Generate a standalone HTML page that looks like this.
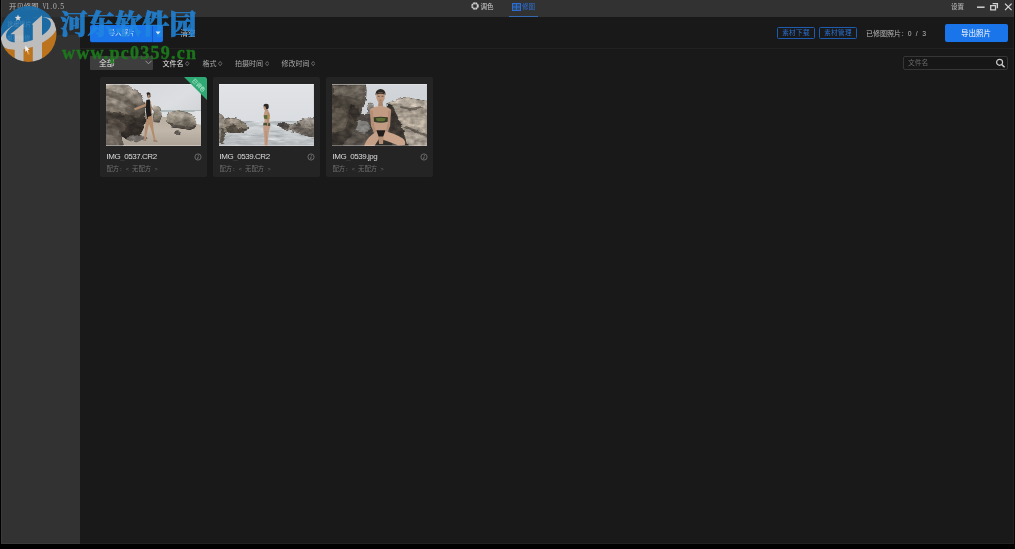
<!DOCTYPE html>
<html lang="zh-CN">
<head>
<meta charset="utf-8">
<title>开贝修图 V1.0.5</title>
<style>
*{box-sizing:border-box;margin:0;padding:0}
html,body{width:1015px;height:549px;overflow:hidden;background:#000}
body{font-family:"Liberation Sans","Noto Sans CJK SC",sans-serif;color:#ddd;position:relative}
.abs{position:absolute}
#app{position:absolute;left:1px;top:0;width:1013px;height:544px;background:#191919;overflow:hidden;will-change:transform}
#app::after{content:"";position:absolute;left:0;top:0;right:0;bottom:0;border:1px solid rgba(255,255,255,.045);border-top:none;pointer-events:none}
#titlebar{position:absolute;left:0;top:0;width:1013px;height:17px;background:#323232}
#sidebar{position:absolute;left:0;top:17px;width:79px;height:527px;background:#323232}
#sidesel{position:absolute;left:0;top:17px;width:79px;height:18px;background:#2a2a2a}
.t{position:absolute;white-space:nowrap;line-height:1}
.mono{font-family:"Liberation Mono","Noto Sans CJK SC",monospace}
#title{left:8px;top:3.200px;font-size:7.4px;color:#b8b8b8}
#title span{margin-left:3.700px;font-family:"Liberation Serif",serif;font-size:7.600px}
#title b,.cnt b{display:inline-block;width:3.600px;text-align:center;font-weight:normal}
.tab{font-size:6.500px;color:#d0d0d0;top:3.800px}
#divider{position:absolute;left:79px;top:48px;width:934px;height:1px;background:#222}
.btn{position:absolute;background:#1a74ea;border-radius:2px}
.obtn{position:absolute;top:27px;height:12px;border:1px solid #1f5cb0;border-radius:1.5px;color:#2b70d2;font-size:6.6px;line-height:10px;text-align:center;letter-spacing:.3px}
.card{position:absolute;top:77px;width:107px;height:100px;background:#242424;border-radius:2px;overflow:hidden}
.card .ph{position:absolute;left:6px;top:6.500px;width:94.500px;height:62px;overflow:hidden;background:#ccc}
.card .fn{left:6.200px;top:76px;font-size:8px;color:#dcdcdc;letter-spacing:-0.45px}
.card .rc{left:6.200px;top:88.500px;font-size:5.33px;line-height:7px;color:#6e6e6e;font-family:"Liberation Mono","Noto Sans CJK SC",monospace}
.card .rc b{font-weight:normal;font-size:6.4px}
.card .fn i{font-style:normal;opacity:.18}
.rib{position:absolute;right:0;top:0;width:23px;height:23px}
.card .info{position:absolute;left:93.300px;top:75.600px;width:8px;height:8px}
.sort{font-size:7px;color:#a8a8a8;top:60.300px}
.sic{position:absolute;top:60.600px;width:4.400px;height:5.200px}
</style>
</head>
<body>
<div id="app">
  <div id="titlebar"></div>
  <div id="sidebar"></div>
  <div id="sidesel"></div>
  <div id="divider"></div>
  <div class="t" id="title">开贝修图<span><b style="transform:scaleX(.7)">V</b><b>1</b><b>.</b><b>0</b><b>.</b><b>5</b></span></div>

  <div class="t" style="left:6.500px;top:21px;font-size:6px;color:#9a9a9a">批量修片</div>
  <div class="t" style="left:6px;top:35.500px;font-size:5.800px;color:#8a8a8a">单张精修</div>
  <!-- tabs -->
  <svg class="abs" style="left:468.800px;top:1.400px" width="10" height="10" viewBox="0 0 10 10"><circle cx="5" cy="5" r="2.800" fill="none" stroke="#d4d4d4" stroke-width="1.900" stroke-dasharray="1.750 0.450"/></svg>
  <div class="t tab" style="left:479.5px">调色</div>
  <svg class="abs" style="left:511px;top:2.500px" width="9" height="8" viewBox="0 0 9 8"><rect x=".5" y=".5" width="8" height="7" fill="#2a6fd6" fill-opacity=".35" stroke="#2a6fd6" stroke-width="1"/><path d="M.5 4h8M4.500 .5v7" stroke="#2a6fd6" stroke-width=".9"/></svg>
  <div class="t tab" style="left:521px;color:#2a70da">修图</div>
  <div class="abs" style="left:508px;top:16px;width:29px;height:1px;background:#3468b0"></div>

  <div class="t tab" style="left:950px;color:#c4c4c4">设置</div>
  <svg class="abs" style="left:974px;top:0" width="40" height="14" viewBox="0 0 40 14">
    <path d="M2 7.2h7.6" stroke="#d0d0d0" stroke-width="1.5"/>
    <path d="M17.6 3.6h4.8v4.6M15.7 5.6h4.8v4.2h-4.8z" fill="none" stroke="#d0d0d0" stroke-width="1.3"/>
    <path d="M30 3.6l6.6 6.6M36.6 3.6l-6.6 6.6" stroke="#d8d8d8" stroke-width="1.2"/>
  </svg>

  <!-- toolbar -->
  <div class="btn" style="left:89px;top:25px;width:73px;height:17px;box-shadow:0 .5px .5px #0d3c8a"></div>
  <div class="abs" style="left:151px;top:25px;width:1px;height:17px;background:#1659c6"></div>
  <div class="t" style="left:107.500px;top:30px;font-size:6.500px;color:#dbe8ff">导入照片</div>
  <div class="t" style="left:179.500px;top:29.500px;font-size:7.500px;color:#c8c8c8">清空</div>

  <div class="obtn" style="left:776px;width:38px">素材下载</div>
  <div class="obtn" style="left:818px;width:38px">素材管理</div>
  <div class="t cnt" style="left:865px;top:30.400px;font-size:7px;color:#bcbcbc">已修图照片<b style="width:3.500px">:</b><span style="margin-left:3.300px;font-size:6.800px"><b>0</b><b>&nbsp;</b><b>/</b><b>&nbsp;</b><b>3</b></span></div>

  <div class="btn" style="left:944px;top:24.300px;width:63.400px;height:17.900px"></div>
  <div class="t" style="left:960px;top:29.500px;font-size:7.500px;color:#fff">导出照片</div>

  <!-- filter -->
  <div class="abs" style="left:89px;top:56px;width:63px;height:14px;background:#3e3e3e;border-radius:1px"></div>
  <div class="t" style="left:98px;top:59.800px;font-size:7.800px;color:#e6e6e6">全部</div>
  <svg class="abs" style="left:144px;top:60px" width="7" height="5" viewBox="0 0 7 5"><path d="M.5 .8L3.5 3.8L6.5 .8" fill="none" stroke="#999" stroke-width="1"/></svg>
  <div class="t sort" style="left:161.5px;color:#e8e8e8">文件名</div>
  <div class="t sort" style="left:201.5px">格式</div>
  <div class="t sort" style="left:234px">拍摄时间</div>
  <div class="t sort" style="left:280.5px">修改时间</div>
  <svg class="sic" style="left:184.300px" viewBox="0 0 5 6"><path d="M2.500 .5L4.500 3L2.500 5.500L.5 3z" fill="none" stroke="#808080" stroke-width=".9"/></svg>
  <svg class="sic" style="left:217.200px" viewBox="0 0 5 6"><path d="M2.500 .5L4.500 3L2.500 5.500L.5 3z" fill="none" stroke="#808080" stroke-width=".9"/></svg>
  <svg class="sic" style="left:263.500px" viewBox="0 0 5 6"><path d="M2.500 .5L4.500 3L2.500 5.500L.5 3z" fill="none" stroke="#808080" stroke-width=".9"/></svg>
  <svg class="sic" style="left:310px" viewBox="0 0 5 6"><path d="M2.500 .5L4.500 3L2.500 5.500L.5 3z" fill="none" stroke="#808080" stroke-width=".9"/></svg>

  <!-- search -->
  <div class="abs" style="left:902px;top:56px;width:105px;height:14px;border:1px solid #363636;border-radius:2px;background:#171717"></div>
  <div class="t" style="left:907px;top:60px;font-size:6.800px;color:#6a6a6a">文件名</div>
  <svg class="abs" style="left:994px;top:58px" width="11" height="10" viewBox="0 0 11 10"><circle cx="4.6" cy="4.3" r="3" fill="none" stroke="#ccc" stroke-width="1.2"/><path d="M6.8 6.6L9.6 9.2" stroke="#ccc" stroke-width="1.5"/></svg>

  <!-- cards -->
  <div class="card" style="left:99.300px">
    <div class="ph"><svg class="abs" style="left:0;top:0" width="94.5" height="62" viewBox="0 0 94 62" preserveAspectRatio="none">
<defs>
<linearGradient id="sky1" x1="0" y1="0" x2="1" y2="1"><stop offset="0" stop-color="#d3d5d8"/><stop offset=".5" stop-color="#dcdee1"/><stop offset="1" stop-color="#c6c9cc"/></linearGradient>
<linearGradient id="sand1" x1="0" y1="0" x2="0" y2="1"><stop offset="0" stop-color="#b6ac9f"/><stop offset=".5" stop-color="#c0b6aa"/><stop offset="1" stop-color="#a89d90"/></linearGradient>
<linearGradient id="rk1" x1=".2" y1="0" x2=".5" y2="1"><stop offset="0" stop-color="#aa9c86"/><stop offset=".4" stop-color="#918372"/><stop offset=".62" stop-color="#5f5447"/><stop offset="1" stop-color="#3c322a"/></linearGradient>
<linearGradient id="rk1b" x1="0" y1="0" x2="0" y2="1"><stop offset="0" stop-color="#aca08c"/><stop offset=".5" stop-color="#93876f"/><stop offset="1" stop-color="#564c41"/></linearGradient>
<filter id="tex1" x="-5%" y="-5%" width="110%" height="110%" color-interpolation-filters="sRGB">
<feTurbulence type="fractalNoise" baseFrequency="0.13 0.2" numOctaves="3" seed="4" result="n"/>
<feColorMatrix in="n" type="matrix" values="1 0 0 0 0  1 0 0 0 0  1 0 0 0 0  0 0 0 0 1" result="g"/>
<feDisplacementMap in="SourceGraphic" in2="n" scale="3.5" xChannelSelector="R" yChannelSelector="G" result="d"/>
<feComposite in="d" in2="g" operator="arithmetic" k1=".7" k2=".65" k3="0" k4="0" result="m"/>
<feColorMatrix in="m" type="saturate" values=".62" result="ds"/>
<feGaussianBlur in="ds" stdDeviation=".65"/>
</filter>
<filter id="b1" x="-5%" y="-5%" width="110%" height="110%"><feGaussianBlur stdDeviation=".65"/></filter>
</defs>
<rect width="94" height="62" fill="url(#sky1)"/>
<g filter="url(#b1)">
<rect x="-2" y="29" width="98" height="36" fill="url(#sand1)"/>
<path d="M50 26.300H96V36L84 37L72 33L58 33L50 31z" fill="#dddfe1"/>
<path d="M50 26.200H96V27.800H50z" fill="#9fadad"/>
<path d="M88 27H96V41L90 40z" fill="#dfe1e3"/>
</g>
<g filter="url(#tex1)">
<path d="M46 22.500Q50.500 20.500 54 24L55.500 32L53 38.500L47.500 38z" fill="url(#rk1b)"/>
<path d="M60.500 31Q63 27.500 70 27Q82 27 88 32.500Q91 37 89.500 42.500L84 45.500L66 43L61 38.500z" fill="url(#rk1b)"/>
<path d="M63 30Q70 27.500 78 29L85 33L72 32.500z" fill="#a99e8a"/>
<path d="M61.500 38L70 41L84 42.500L89 41L88.500 44L84 45.800L66 43.300z" fill="#4e453b"/>
<ellipse cx="71" cy="48.800" rx="3.200" ry="1.300" fill="#665d52"/>
<path d="M-2 -2H13Q26 1.500 33 9Q38.500 15 38.800 22L39 36Q37.500 46 33.500 50.500L20 54L8 50L-2 40z" fill="url(#rk1)"/>
<path d="M-2 6Q12 6 22 14Q30 21 34 28L31 30Q24 22 14 17Q6 13 -2 13z" fill="#5a4c3e" opacity=".55"/>
<path d="M-2 20Q8 19 16 24Q24 30 28 38L24 40Q18 32 10 28Q4 26 -2 27z" fill="#8a7a64" opacity=".55"/>
<path d="M-2 27Q16 28 33 34L38.500 27L39.500 38Q37.500 46 33.500 50.500L20 54L8 50L-2 41z" fill="#2c241d" opacity=".58"/>
<path d="M2 35Q12 33 20 40Q22 46 16 48Q8 46 2 42z" fill="#6a5a48" opacity=".55"/>
<path d="M-2 39Q8 40 14 47L18 64H-2z" fill="#63574a"/>
<path d="M-2 50Q6 50 12 57L14 64H-2z" fill="#786b5c"/>
<path d="M19 54L33.500 50.500L41 54L30 58.500z" fill="#91877b" opacity=".75"/>
</g>
<g filter="url(#b1)">
<path d="M40.300 9Q42.300 7.300 44 9.300L44.300 13L41.600 13.800z" fill="#2a2320"/>
<path d="M41.500 10.800L43.400 10.600L43.600 14L42 14.600z" fill="#b08a6c"/>
<path d="M27.500 24.500L38.500 20L40.600 16L43 15.400L44.200 18.500L40.500 22L29 26.300z" fill="#b18c6e"/>
<path d="M40.200 16L43.600 15.400L45 22L45.300 31L43.800 36L40.800 35L39.500 26z" fill="#1f1b1a"/>
<path d="M43.600 16L45 20L45.800 29L44.800 30z" fill="#b8937a"/>
<path d="M41.500 33L45.800 31.500L46.800 39L47.300 46L49.300 56L47.700 56.500L45 46L42.800 40z" fill="#b38c6c"/>
<path d="M40.600 34L43.600 37L41.300 46L39.600 55.500L38 55.500L38.600 45z" fill="#b38d72"/>
<path d="M36.500 56.500L40 55L40 57z M46.800 56L50.800 56.500L51.200 58L47.300 57.500z" fill="#9a7860"/>
</g>
<rect width="94" height=".7" fill="#f0f0f0" opacity=".75"/><rect y="61.300" width="94" height=".7" fill="#f0f0f0" opacity=".6"/>
</svg></div>
    <svg class="rib" viewBox="0 0 23 23"><path d="M0 0H21.500Q23 0 23 1.500V23z" fill="#2fa974"/><text x="0" y="0" transform="translate(14.900 8.100) rotate(45)" text-anchor="middle" font-size="5.300" fill="#c4f2dc" font-family="'Liberation Sans','Noto Sans CJK SC',sans-serif" dominant-baseline="central">已调色</text></svg>
    <div class="t fn">IMG<i>_</i>0537.CR2</div>
    <div class="t rc"><b>配方</b>: &lt; <b>无配方</b> &gt;</div>
    <svg class="info" viewBox="0 0 8 8"><circle cx="4" cy="4" r="3.1" fill="none" stroke="#808080" stroke-width=".75"/><path d="M4.500 2.200L4.300 3M4.200 3.600L3.600 6" stroke="#808080" stroke-width=".85"/></svg>
  </div>
  <div class="card" style="left:212.300px">
    <div class="ph"><svg class="abs" style="left:0;top:0" width="94.5" height="62" viewBox="0 0 94 62" preserveAspectRatio="none">
<defs>
<linearGradient id="sky2" x1="0" y1="0" x2="0" y2="1"><stop offset="0" stop-color="#e1e3e7"/><stop offset="1" stop-color="#d5d8dc"/></linearGradient>
<linearGradient id="sea2" x1="0" y1="0" x2="0" y2="1"><stop offset="0" stop-color="#b4babd"/><stop offset=".35" stop-color="#c6cacc"/><stop offset="1" stop-color="#a9adb0"/></linearGradient>
<filter id="tex2" x="-5%" y="-5%" width="110%" height="110%" color-interpolation-filters="sRGB">
<feTurbulence type="fractalNoise" baseFrequency="0.2 0.3" numOctaves="3" seed="7" result="n"/>
<feColorMatrix in="n" type="matrix" values="1 0 0 0 0  1 0 0 0 0  1 0 0 0 0  0 0 0 0 1" result="g"/>
<feDisplacementMap in="SourceGraphic" in2="n" scale="3.5" xChannelSelector="R" yChannelSelector="G" result="d"/>
<feComposite in="d" in2="g" operator="arithmetic" k1=".7" k2=".65" k3="0" k4="0" result="m"/>
<feColorMatrix in="m" type="saturate" values=".62" result="ds"/>
<feGaussianBlur in="ds" stdDeviation=".65"/>
</filter>
<filter id="sea2f" x="0" y="0" width="100%" height="100%" color-interpolation-filters="sRGB">
<feTurbulence type="fractalNoise" baseFrequency="0.06 0.3" numOctaves="3" seed="9" result="n"/>
<feColorMatrix in="n" type="matrix" values="0 0 0 0 .88  0 0 0 0 .89  0 0 0 0 .9  2.4 0 0 0 -1.0" result="w"/>
<feColorMatrix in="n" type="matrix" values="0 0 0 0 .5  0 0 0 0 .53  0 0 0 0 .55  0 2.0 0 0 -1.0" result="k"/>
<feComposite in="w" in2="SourceGraphic" operator="in" result="w2"/>
<feComposite in="k" in2="SourceGraphic" operator="in" result="k2"/>
<feMerge result="m"><feMergeNode in="SourceGraphic"/><feMergeNode in="k2"/><feMergeNode in="w2"/></feMerge>
<feGaussianBlur in="m" stdDeviation=".5"/>
</filter>
<filter id="b2" x="-5%" y="-5%" width="110%" height="110%"><feGaussianBlur stdDeviation=".65"/></filter>
</defs>
<rect width="94" height="62" fill="url(#sky2)"/>
<g filter="url(#sea2f)">
<rect x="-2" y="37" width="98" height="28" fill="url(#sea2)"/>
</g>
<g filter="url(#b2)" opacity=".6">
<path d="M20 44Q40 41 60 45Q75 49 96 56V60Q70 52 50 50Q30 48 10 54z" fill="#d0d3d5" opacity=".7"/>
<path d="M4 55Q30 50 50 56Q70 60 96 58V64H-2z" fill="#b9bdc0" opacity=".8"/>
</g>
<g filter="url(#tex2)">
<path d="M-2 30Q3 29 5 34L6.500 44L5 60H-2z" fill="#9a8d7a"/>
<path d="M2 44L5.500 46L4.500 60H1z" fill="#5e5548"/>
<path d="M5 36Q10 33 17 34.500Q24 37 27 41L29 44L27 47Q20 49.500 12 48.500L6 47z" fill="#8c7c66"/>
<path d="M8 35.500Q14 34 19 36L22 39L12 39z" fill="#a49580"/>
<path d="M7 43L14 41L20 44L27 45L26 47.500Q18 50 8 48z" fill="#54483a"/>
<path d="M58 40Q61 37.500 66 38.500L72 41L76 39Q80 36 86 34.500L96 33V53Q88 53 82 50L72 47L62 44z" fill="#857a6c"/>
<path d="M58 40Q61 37.500 66 38.500L71 41.500L68 45L62 44z" fill="#4e4842"/>
<path d="M80 37Q86 34 96 33V40L88 41z" fill="#a0958a"/>
<path d="M72 44L80 42L86 45L96 44V53Q88 53 82 50z" fill="#6a6056"/>
<path d="M76 40L80 38.500L82 42L78 43z" fill="#5a5148"/>
</g>
<g filter="url(#b2)">
<path d="M44.300 21Q46.500 18.600 49.200 20.600Q50 23 48.800 25L46.500 25.500L44.800 24.500z" fill="#2b2522"/>
<path d="M44.300 22.300L46.300 22.500L47 25.800L45.200 26.200Q44.300 24.500 44.300 22.300z" fill="#ba967c"/>
<path d="M46 25.500H48.600L49.200 27.500H45.600z" fill="#b28c74"/>
<path d="M45.500 27Q47.500 26.500 49.300 27.200Q50.800 29.500 50.700 32Q50 35 50 37Q51.200 39.500 51 42Q50.300 45 49.600 48L48.800 54L48.300 62H45.300L45 54L44.300 47Q43.800 43.500 44.200 41Q45.500 38 45.300 36Q44.300 33 44.500 31Q44.800 28.500 45.500 27z" fill="#c29c84"/>
<path d="M44.500 31.200Q47 30.600 50.600 31.600L50.500 34.800Q47.500 35.600 44.800 34.600z" fill="#5f6a3a"/>
<path d="M49 31.200L50.700 31.600L50.600 35L49.200 35.200z" fill="#c4b444"/>
<path d="M44.200 39Q47.500 38.300 50.900 39.200L50.900 41.800Q48 42.300 46 41.300L44 41.600z" fill="#46503a"/>
<path d="M48.200 27.500Q49.800 28 50 31L49.600 37L48.600 42L47.600 42L48 36z" fill="#b08a72"/>
<path d="M46.800 47L47.200 62" stroke="#a8826a" stroke-width=".5" fill="none"/>
</g>
<rect width="94" height=".7" fill="#f4f4f4" opacity=".75"/><rect y="61.300" width="94" height=".7" fill="#f0f0f0" opacity=".6"/>
</svg></div>
    <div class="t fn">IMG<i>_</i>0539.CR2</div>
    <div class="t rc"><b>配方</b>: &lt; <b>无配方</b> &gt;</div>
    <svg class="info" viewBox="0 0 8 8"><circle cx="4" cy="4" r="3.1" fill="none" stroke="#808080" stroke-width=".75"/><path d="M4.500 2.200L4.300 3M4.200 3.600L3.600 6" stroke="#808080" stroke-width=".85"/></svg>
  </div>
  <div class="card" style="left:325.300px">
    <div class="ph"><svg class="abs" style="left:0;top:0" width="94.5" height="62" viewBox="0 0 94 62" preserveAspectRatio="none">
<defs>
<linearGradient id="sky3" x1="0" y1="0" x2="0" y2="1"><stop offset="0" stop-color="#d3d6da"/><stop offset="1" stop-color="#c6c9cc"/></linearGradient>
<linearGradient id="rk3" x1="1" y1="0" x2="0" y2="1"><stop offset="0" stop-color="#675b4d"/><stop offset=".5" stop-color="#4b4135"/><stop offset="1" stop-color="#372f27"/></linearGradient>
<filter id="tex3" x="-5%" y="-5%" width="110%" height="110%" color-interpolation-filters="sRGB">
<feTurbulence type="fractalNoise" baseFrequency="0.14 0.2" numOctaves="3" seed="11" result="n"/>
<feColorMatrix in="n" type="matrix" values="1 0 0 0 0  1 0 0 0 0  1 0 0 0 0  0 0 0 0 1" result="g"/>
<feDisplacementMap in="SourceGraphic" in2="n" scale="3.5" xChannelSelector="R" yChannelSelector="G" result="d"/>
<feComposite in="d" in2="g" operator="arithmetic" k1=".7" k2=".65" k3="0" k4="0" result="m"/>
<feColorMatrix in="m" type="saturate" values=".62" result="ds"/>
<feGaussianBlur in="ds" stdDeviation=".7"/>
</filter>
<filter id="b3" x="-5%" y="-5%" width="110%" height="110%"><feGaussianBlur stdDeviation=".7"/></filter>
</defs>
<rect width="94" height="62" fill="url(#sky3)"/>
<g filter="url(#tex3)">
<path d="M36 19Q39 18 41 20L42 32L34 34z" fill="#8a8074"/>
<rect x="-2" y="30" width="98" height="34" fill="#4c453e"/>
<path d="M26 37Q31 36 36 38L38 46L30 50L24 46z" fill="#8e8e8c" opacity=".8"/>
<path d="M14 50Q26 46 36 50L40 64H6z" fill="#5a5046"/>
<path d="M-2 -2H33Q35 6 34 13Q33 20 30 26L27 36Q24 44 18 52L8 64H-2z" fill="url(#rk3)"/>
<path d="M2 2H30Q32 8 30 16L22 14Q12 10 2 12z" fill="#75695a" opacity=".7"/>
<path d="M-2 24Q8 22 14 28Q18 36 12 46L-2 50z" fill="#6a5c4a" opacity=".7"/>
<path d="M18 20Q26 22 28 30L24 40Q20 32 16 28z" fill="#2e2620" opacity=".7"/>
<path d="M54.500 19Q58 16.500 64 16L68 13.500Q74 12.500 80 15L96 17V64H70L62 50Q57 40 56 30z" fill="#a4947f"/>
<path d="M58 18Q64 16 68 14Q76 13 96 18V26Q80 20 66 22z" fill="#b8a894"/>
<path d="M66 30Q78 26 96 32V50Q84 40 70 40z" fill="#b5a38d" opacity=".9"/>
<path d="M54.500 19L60 22L66 34L72 48L76 62H66L58 48Q54 36 54.500 19z" fill="#40372e"/>
<path d="M68 22L78 24L90 22L91 23.500L78 26L68 24z" fill="#5a4e42" opacity=".8"/>
<path d="M70 44Q80 42 96 52V64H76z" fill="#ab9c88"/>
<path d="M70 43L74 42L96 51V53.500L76 46z" fill="#5c5044" opacity=".8"/>
</g>
<g filter="url(#b3)">
<path d="M40 50H60V64H40z" fill="#2a2622" opacity=".75"/>
<path d="M43.300 11.500Q42.800 5.600 48.200 5Q53.600 5.400 53.300 11.500Q52.800 8.800 48.300 8.400Q44 8.800 43.300 11.500z" fill="#2c2622"/>
<path d="M43.900 9.800Q48.200 6.800 52.700 9.800L52.400 14.500Q50.800 19 48.300 19Q45.800 19 44.300 14.500z" fill="#bb957b"/>
<path d="M44.200 9.500Q48.200 7.200 52.400 9.500L52.200 10.400Q48.200 8.900 44.400 10.400z" fill="#3a302a"/><path d="M45.500 12.300h2M49.200 12.300h2" stroke="#4a3a30" stroke-width=".7"/><path d="M47.300 16.200h2" stroke="#8a5a4a" stroke-width=".7"/>
<path d="M46.400 17.500H50.300L50.800 22.500H45.800z" fill="#ab876d"/>
<path d="M37.500 26Q38.500 23.500 46 22.200H50.600Q57.500 23.500 58.800 26L57.500 33L55.500 41L56 48.500H41.500L41.500 41L39 33z" fill="#c29c82"/>
<path d="M41.300 33.300Q48.200 32 55.600 33.300L55.400 37.800Q48.200 39.600 41.600 37.800z" fill="#353c2a"/>
<path d="M43.500 34.300Q48.200 33.300 53.500 34.300L52.600 36.800Q48.200 37.800 44.500 36.800z" fill="#5e6e30"/>
<path d="M37.500 26L40.800 27L41.300 40L46.500 54.500L44.800 55.500L38.800 42z" fill="#b38d74"/>
<path d="M58.800 26L55.800 27.200L55.600 40L50.500 54.500L52.200 55.500L57.800 42z" fill="#b38d74"/>
<path d="M44.200 46.300H53L52.300 51.500L48.600 54.200L45.300 51.500z" fill="#211f1c"/>
<path d="M44.500 47.300L47 54.500L41 64H31.500Q33 55.500 40 50.500z" fill="#c6a086"/>
<path d="M52.800 47.300Q62 49.200 70.500 54.500Q73.800 57.500 72.500 61L66 61.500Q58 58 50 55.500z" fill="#caa48a"/>
<path d="M46 52.500L51.300 52.500L50.800 60L46.800 60z" fill="#b38d72"/>
</g>
<rect width="94" height=".7" fill="#f0f0f0" opacity=".7"/><rect y="61.300" width="94" height=".7" fill="#e8e8e8" opacity=".5"/>
</svg></div>
    <div class="t fn">IMG<i>_</i>0539.jpg</div>
    <div class="t rc"><b>配方</b>: &lt; <b>无配方</b> &gt;</div>
    <svg class="info" viewBox="0 0 8 8"><circle cx="4" cy="4" r="3.1" fill="none" stroke="#808080" stroke-width=".75"/><path d="M4.500 2.200L4.300 3M4.200 3.600L3.600 6" stroke="#808080" stroke-width=".85"/></svg>
  </div>

  <!-- watermark -->
  <svg class="abs" id="wmlogo" style="left:-1px;top:5px" width="60" height="60" viewBox="0 5 60 60">
    <defs><clipPath id="cc"><circle cx="28.500" cy="34" r="28"/></clipPath></defs>
    <g clip-path="url(#cc)" opacity=".93">
      <rect x="0" y="5" width="60" height="60" fill="#c6791c"/>
      <g transform="rotate(-19 28.5 33)">
        <rect x="-10" y="-10" width="80" height="43" fill="#1b6fae"/>
        <ellipse cx="28.500" cy="33.500" rx="29.500" ry="14" fill="#c9c9c9"/>
        <ellipse cx="29.500" cy="30" rx="23.500" ry="11" fill="#1b6fae"/>
      </g>
      <path d="M10.4 34.2L23.5 23.4V64H14.7V34.2z" fill="#c9c9c9"/>
      <path d="M31.6 24.6L42 15.2V64H32.8V24.6z" fill="#c9c9c9"/>
      <path d="M18 14.6l.9 2.2 2.3.1-1.8 1.5.6 2.3-2-1.3-2 1.3.6-2.3-1.8-1.5 2.3-.1z" fill="#e8e8e8"/>
    </g>
    <path d="M25.2 45.6l4.4 4.2-2 .2 1.1 2.6-.9.4-1.1-2.6-1.5 1.3z" fill="#f2f2f2"/>
    <path d="M28.5 51.5l.5 1.2 1.3.1-1 .8.3 1.3-1.1-.7-1.1.7.3-1.3-1-.8 1.3-.1z" fill="#e09a3a"/>
  </svg>
  <div class="t" style="left:59.300px;top:7px;font-size:27px;letter-spacing:.3px;line-height:36px;font-weight:900;color:#2088e0;opacity:.84;-webkit-text-stroke:.7px #2088e0;font-family:'Liberation Serif','Noto Serif CJK SC',serif">河东软件园</div>
  <div class="t" style="left:61px;top:41.500px;font-size:18px;line-height:22px;font-weight:bold;color:#1c7c1c;opacity:.92;letter-spacing:1.25px;-webkit-text-stroke:.4px #1c7c1c;font-family:'Liberation Serif',serif">www.pc0359.cn</div>
  <svg class="abs" style="left:154px;top:31px" width="6" height="4" viewBox="0 0 6 4"><path d="M.5 .5h5L3 3.6z" fill="#dce9ff"/></svg>
  <div class="t" style="left:6.500px;top:21px;font-size:6px;color:#cfe3f5;opacity:.15">批量修片</div>
  <div class="t" style="left:6px;top:35.500px;font-size:5.800px;color:#cfe3f5;opacity:.14">单张精修</div>
</div>
</body>
</html>
